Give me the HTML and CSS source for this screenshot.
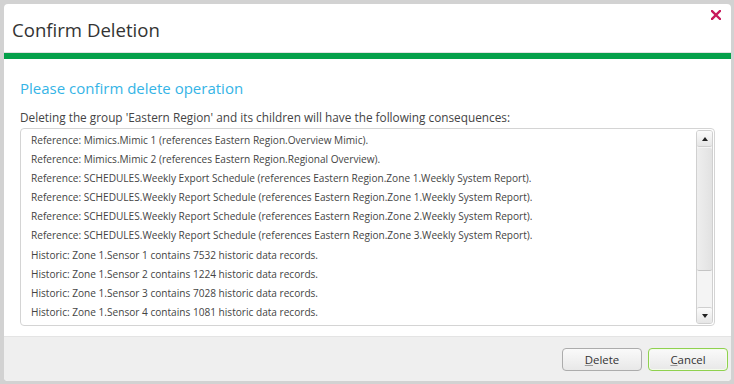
FILE: index.html
```html
<!DOCTYPE html>
<html lang="en">
<head>
    <meta charset="UTF-8">
    <title>Confirm Deletion</title>
    <link rel="stylesheet" href="styles.css">
</head>
<body>

<div class="dialog">
    <div class="header">
        <h1>Confirm Deletion</h1>
        <svg class="close" width="10" height="10" viewBox="0 0 10 10">
            <path d="M1 1 L9 9 M9 1 L1 9" stroke="#c8195c" stroke-width="2.4" stroke-linecap="square"/>
        </svg>
    </div>
    <div class="accent"></div>

    <div class="content">
        <h2>Please confirm delete operation</h2>
        <p class="intro">Deleting the group 'Eastern Region' and its children will have the following consequences:</p>

        <div class="list">
            <ul class="items">
                <li>Reference: Mimics.Mimic 1 (references Eastern Region.Overview Mimic).</li>
                <li>Reference: Mimics.Mimic 2 (references Eastern Region.Regional Overview).</li>
                <li>Reference: SCHEDULES.Weekly Export Schedule (references Eastern Region.Zone 1.Weekly System Report).</li>
                <li>Reference: SCHEDULES.Weekly Report Schedule (references Eastern Region.Zone 1.Weekly System Report).</li>
                <li>Reference: SCHEDULES.Weekly Report Schedule (references Eastern Region.Zone 2.Weekly System Report).</li>
                <li>Reference: SCHEDULES.Weekly Report Schedule (references Eastern Region.Zone 3.Weekly System Report).</li>
                <li>Historic: Zone 1.Sensor 1 contains 7532 historic data records.</li>
                <li>Historic: Zone 1.Sensor 2 contains 1224 historic data records.</li>
                <li>Historic: Zone 1.Sensor 3 contains 7028 historic data records.</li>
                <li>Historic: Zone 1.Sensor 4 contains 1081 historic data records.</li>
            </ul>
            <div class="scrollbar">
                <div class="arrow up"></div>
                <div class="thumb"></div>
                <div class="track"></div>
                <div class="arrow down"></div>
            </div>
        </div>
    </div>

    <div class="footer">
        <button class="btn"><u>D</u>elete</button>
        <button class="btn primary"><u>C</u>ancel</button>
    </div>
</div>

</body>
</html>
```

FILE: styles.css
```css
html, body {
    margin: 0;
    height: 100%;
}
body {
    font-family: "Open Sans", "Noto Sans", sans-serif;
    background-color: #d2d2d2;
    color: #333;
    padding: 4px 3px 3px 4px;
    box-sizing: border-box;
}
.dialog {
    height: 100%;
    background-color: white;
    border-radius: 4px;
    display: flex;
    flex-direction: column;
    overflow: hidden;
}
.header {
    height: 48px;
    border-bottom: 1px solid #e2e2e2;
    display: flex;
    justify-content: space-between;
    padding: 0 8px;
}
h1 {
    margin: 0;
    font-size: 18.6px;
    font-weight: normal;
    color: #333;
    line-height: 48px;
    padding-top: 2px;
}
.close {
    margin: 6px 2px 0 0;
}
.accent {
    height: 6px;
    background-color: #05a04a;
}
.content {
    padding: 0 16px;
}
h2 {
    margin: 17px 0 0 0;
    font-size: 15px;
    font-weight: normal;
    color: #35b4e6;
    line-height: 24px;
}
.intro {
    margin: 9px 0 0 0;
    font-size: 11.8px;
    line-height: 16px;
    color: #444;
}
.list {
    margin-top: 3px;
    height: 198px;
    border: 1px solid #d4d4d4;
    border-radius: 4px;
    display: flex;
    box-sizing: border-box;
    overflow: hidden;
}
.items {
    list-style: none;
    margin: 0;
    padding: 2px 10px;
    flex: 1;
    font-size: 10.1px;
    line-height: 19.1px;
    color: #444;
    white-space: nowrap;
}
.scrollbar {
    width: 15px;
    margin: 1px 1px 1px 0;
    display: flex;
    flex-direction: column;
    background-color: #f4f4f4;
    border: 1px solid #d0d0d0;
    border-radius: 3px;
}
.arrow {
    height: 15px;
    background: linear-gradient(#fbfbfb, #e6e6e6);
    border-radius: 2px;
    display: flex;
    align-items: center;
    justify-content: center;
}
.arrow::after {
    content: "";
    border-left: 3px solid transparent;
    border-right: 3px solid transparent;
}
.up::after {
    border-bottom: 4px solid #222;
}
.down::after {
    border-top: 4px solid #222;
}
.up {
    border-bottom: 1px solid #cfcfcf;
}
.down {
    border-top: 1px solid #cfcfcf;
}
.thumb {
    height: 122px;
    margin-top: 1px;
    background: linear-gradient(90deg, #eeeeee, #e2e2e2);
    border-bottom: 1px solid #c4c4c4;
    border-radius: 2px;
}
.track {
    flex: 1;
}
.footer {
    margin-top: auto;
    height: 44px;
    background-color: #efefef;
    border-top: 1px solid #e4e4e4;
    display: flex;
    justify-content: flex-end;
    align-items: center;
    gap: 6px;
    padding: 0 3px 0 0;
}
.btn {
    width: 80px;
    height: 23px;
    font-family: inherit;
    font-size: 11.4px;
    color: #333;
    background: linear-gradient(#fafafa, #e8e8e8);
    border: 1px solid #acacac;
    border-radius: 4px;
    padding: 0;
}
.btn u {
    text-decoration-color: #999;
}
.primary {
    border-color: #8fd14f;
    box-shadow: inset 0 0 0 1px #f4fbec;
}
```
